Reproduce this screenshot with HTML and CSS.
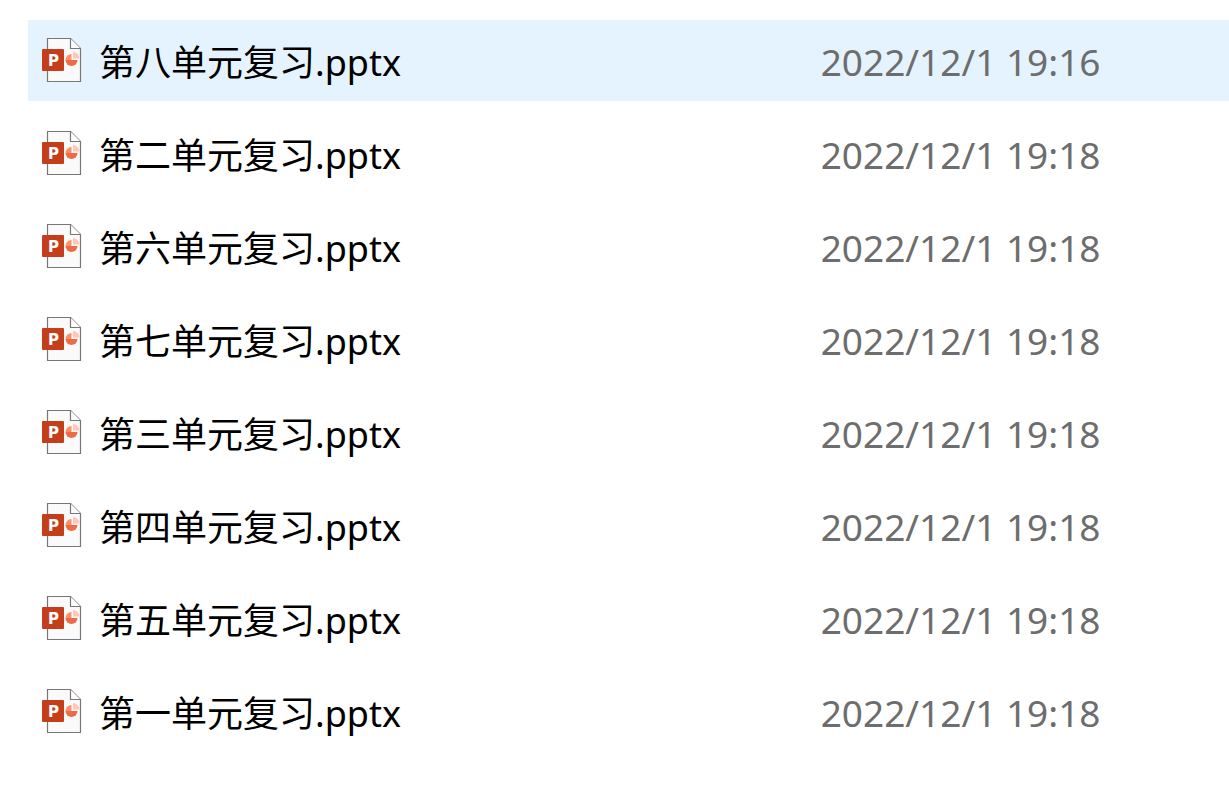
FILE: index.html
```html
<!DOCTYPE html>
<html lang="zh-CN">
<head>
    <meta charset="utf-8" />
    <title>单元复习</title>
    <link rel="stylesheet" href="styles.css">
</head>
<body>
    <svg class="defs" aria-hidden="true">
        <symbol id="pptx" viewBox="0 0 40 44">
            <path d="M5.5 .5H28.5L38.5 10.5V43.5H5.5Z" fill="#fafafa" stroke="#797774" stroke-width="1.2" />
            <path d="M28.5 .5V10.5H38.5" fill="#fff" stroke="#797774" stroke-width="1.2" />
            <path d="M29.5 16A6 6 0 0 0 23.5 22H29.5Z" fill="#ff8f6b" />
            <path d="M23.5 22H35.5A6 6 0 0 1 23.5 22Z" fill="#ed6c47" />
            <path d="M31 14A6.5 6.5 0 0 1 37.5 20.5H31Z" fill="#ffc7b5" />
            <rect y="11" width="22" height="22" rx="1" fill="#c43e1c" />
        </symbol>
    </svg>
    <table class="files">
        <tbody>
            <tr class="hover">
                <td class="name"><div class="file"><svg class="icon"><use href="#pptx" /><text x="6" y="28">P</text></svg><span>第八单元复习.pptx</span></div></td>
                <td class="date">2022/12/1 19:16</td>
            </tr>
            <tr>
                <td class="name"><div class="file"><svg class="icon"><use href="#pptx" /><text x="6" y="28">P</text></svg><span>第二单元复习.pptx</span></div></td>
                <td class="date">2022/12/1 19:18</td>
            </tr>
            <tr>
                <td class="name"><div class="file"><svg class="icon"><use href="#pptx" /><text x="6" y="28">P</text></svg><span>第六单元复习.pptx</span></div></td>
                <td class="date">2022/12/1 19:18</td>
            </tr>
            <tr>
                <td class="name"><div class="file"><svg class="icon"><use href="#pptx" /><text x="6" y="28">P</text></svg><span>第七单元复习.pptx</span></div></td>
                <td class="date">2022/12/1 19:18</td>
            </tr>
            <tr>
                <td class="name"><div class="file"><svg class="icon"><use href="#pptx" /><text x="6" y="28">P</text></svg><span>第三单元复习.pptx</span></div></td>
                <td class="date">2022/12/1 19:18</td>
            </tr>
            <tr>
                <td class="name"><div class="file"><svg class="icon"><use href="#pptx" /><text x="6" y="28">P</text></svg><span>第四单元复习.pptx</span></div></td>
                <td class="date">2022/12/1 19:18</td>
            </tr>
            <tr>
                <td class="name"><div class="file"><svg class="icon"><use href="#pptx" /><text x="6" y="28">P</text></svg><span>第五单元复习.pptx</span></div></td>
                <td class="date">2022/12/1 19:18</td>
            </tr>
            <tr>
                <td class="name"><div class="file"><svg class="icon"><use href="#pptx" /><text x="6" y="28">P</text></svg><span>第一单元复习.pptx</span></div></td>
                <td class="date">2022/12/1 19:18</td>
            </tr>
        </tbody>
    </table>
</body>
</html>
```

FILE: styles.css
```css
body { margin: 0; padding: 8px 0 0 28px; background: #fff; font-family: "Noto Sans", "Noto Sans CJK SC", sans-serif; }
.defs { position: absolute; width: 0; height: 0; }
.files { width: 100%; border-spacing: 0 12px; }
    .files td { height: 63px; padding: 18px 0 0; vertical-align: top; line-height: 48px; white-space: nowrap; }
    .files .hover { background-color: #e5f3ff; }
    .files .name { width: 66%; color: #000; font-size: 36px; line-height: 50px; }
.file { display: flex; align-items: flex-start; gap: 17px; padding-left: 14px; }
.icon { flex: none; width: 40px; height: 44px; }
    .icon text { fill: #fff; font: bold 15px "DejaVu Sans", sans-serif; }
.date { color: #6d6d6d; font-size: 37px; }
```
